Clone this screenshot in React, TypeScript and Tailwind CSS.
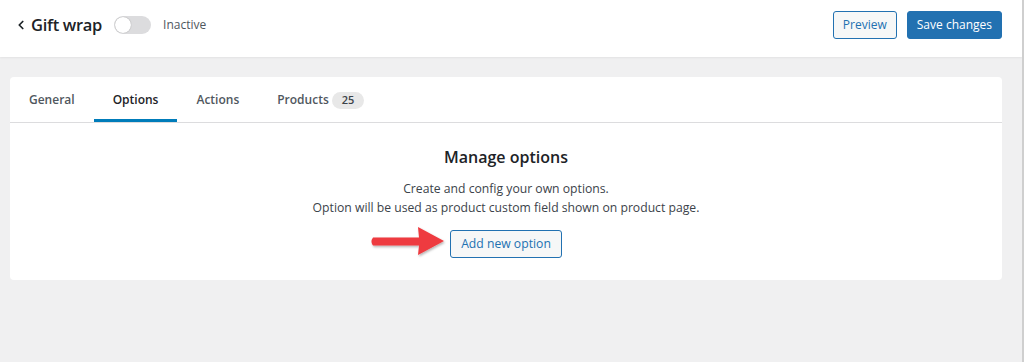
import { ChevronLeft } from 'lucide-react'

export default function App() {
  const tabs = [
    { label: 'General' },
    { label: 'Options', active: true },
    { label: 'Actions' },
    { label: 'Products', count: 25 },
  ]

  return (
    <div className="w-[1024px] h-[362px] bg-[#f0f0f1] border-r-2 border-[#cfcfcf] font-['Segoe_UI','Open_Sans',sans-serif] text-[#1d2327] overflow-hidden">
      {/* Top bar */}
      <div className="h-[57px] bg-white flex items-center justify-between pb-[7px] pl-[14px] pr-[20px] shadow-[0_1px_2px_rgba(0,0,0,0.06)]">
        <div className="flex items-center">
          <ChevronLeft className="w-[14px] h-[14px] text-[#1d2327]" strokeWidth={3} />
          <h1 className="ml-[3px] text-[16.5px] font-semibold leading-none tracking-[-0.3px]">Gift wrap</h1>
          <div className="ml-[12px] w-[37px] h-[18px] rounded-full bg-[#dcdcde] relative">
            <span className="absolute left-[1px] top-[1px] w-[16px] h-[16px] rounded-full bg-white shadow-[0_0_1px_rgba(0,0,0,0.4)]"></span>
          </div>
          <span className="ml-[12px] text-[12px] text-[#50575e]">Inactive</span>
        </div>
        <div className="flex items-center gap-[10px]">
          <button className="h-[28px] px-[9px] rounded-[3px] border border-[#2271b1] bg-[#f6f7f7] text-[#2271b1] text-[12px]">
            Preview
          </button>
          <button className="h-[28px] px-[9px] rounded-[3px] border border-[#2271b1] bg-[#2271b1] text-white text-[12px]">
            Save changes
          </button>
        </div>
      </div>

      {/* Card */}
      <div className="mt-[20px] ml-[10px] mr-[20px] h-[203px] bg-white rounded-[4px]">
        <div className="flex h-[46px] border-b border-[#dcdcde]">
          {tabs.map((t) => (
            <div
              key={t.label}
              className={`flex items-center pt-[4px] px-[19px] text-[12px] font-semibold border-b-[3px] ${
                t.active ? 'border-[#007cba] text-[#1d2327]' : 'border-transparent text-[#50575e]'
              }`}
            >
              {t.label}
              {t.count && (
                <span className="ml-[3px] px-[10px] h-[17px] flex items-center rounded-full bg-[#e8e8e8] text-[11px] text-[#3c434a] font-semibold">
                  {t.count}
                </span>
              )}
            </div>
          ))}
        </div>

        <div className="flex flex-col items-center pt-[23px]">
          <h2 className="text-[16px] font-semibold leading-[22px]">Manage options</h2>
          <p className="mt-[11px] text-[12.2px] leading-[19px] text-[#3c434a] text-center">
            Create and config your own options.
            <br />
            Option will be used as product custom field shown on product page.
          </p>
          <div className="relative mt-[13px]">
            {/* red callout arrow */}
            <svg className="absolute right-full top-[-6px] mr-[2px]" width="80" height="36" viewBox="0 0 80 36">
              <defs>
                <filter id="sh" x="-10%" y="-20%" width="130%" height="150%">
                  <feDropShadow dx="1" dy="1.5" stdDeviation="1.2" floodColor="#000" floodOpacity="0.3" />
                </filter>
              </defs>
              <path
                d="M5 13.5 H51 L50 3 L76 17 L50 31 L51 21.5 H5 Q2 17.5 5 13.5 Z"
                fill="#ee3a3f"
                filter="url(#sh)"
              />
            </svg>
            <button className="h-[28px] px-[10px] rounded-[3px] border border-[#2271b1] bg-[#f6f7f7] text-[#2271b1] text-[12.2px]">
              Add new option
            </button>
          </div>
        </div>
      </div>
    </div>
  )
}
